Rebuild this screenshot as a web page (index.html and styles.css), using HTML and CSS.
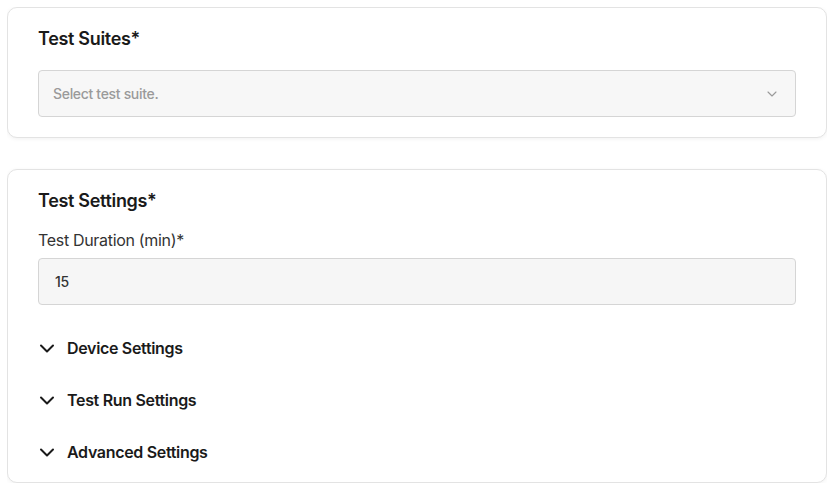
FILE: index.html
```html
<!DOCTYPE html>
<html lang="en">
<head>
    <meta charset="UTF-8">
    <meta name="viewport" content="width=device-width, initial-scale=1.0">
    <title>Test Configuration</title>
    <link rel="stylesheet" href="styles.css">
</head>
<body>
    <div class="card">
        <h2 class="card-title">Test Suites*</h2>
        <div class="select-box">
            <span class="placeholder">Select test suite.</span>
            <svg class="select-chevron" width="10" height="6" viewBox="0 0 10 6" fill="none">
                <path d="M1 1l4 4 4-4" stroke="#9a9a9a" stroke-width="1.1" stroke-linecap="round" stroke-linejoin="round"/>
            </svg>
        </div>
    </div>

    <div class="card card-settings">
        <h2 class="card-title">Test Settings*</h2>
        <label class="field-label" for="duration">Test Duration (min)*</label>
        <input class="text-input" id="duration" type="text" value="15">

        <div class="accordion">
            <div class="accordion-item">
                <svg class="acc-chevron" width="18" height="18" viewBox="0 0 18 18" fill="none">
                    <path d="M3 6.5l6 6 6-6" stroke="#1a1a1a" stroke-width="2" stroke-linecap="round" stroke-linejoin="round"/>
                </svg>
                <span>Device Settings</span>
            </div>
            <div class="accordion-item">
                <svg class="acc-chevron" width="18" height="18" viewBox="0 0 18 18" fill="none">
                    <path d="M3 6.5l6 6 6-6" stroke="#1a1a1a" stroke-width="2" stroke-linecap="round" stroke-linejoin="round"/>
                </svg>
                <span>Test Run Settings</span>
            </div>
            <div class="accordion-item">
                <svg class="acc-chevron" width="18" height="18" viewBox="0 0 18 18" fill="none">
                    <path d="M3 6.5l6 6 6-6" stroke="#1a1a1a" stroke-width="2" stroke-linecap="round" stroke-linejoin="round"/>
                </svg>
                <span>Advanced Settings</span>
            </div>
        </div>
    </div>
</body>
</html>
```

FILE: styles.css
```css
body {
    font-family: Inter, "Noto Sans", sans-serif;
    letter-spacing: -0.02em;
    margin: 7px;
    background-color: #ffffff;
    color: #1a1a1a;
}
.card {
    border: 1px solid #e3e3e3;
    border-radius: 10px;
    box-shadow: 0 1px 4px rgba(0, 0, 0, 0.06);
    padding: 20px 30px;
    background-color: #ffffff;
}
.card + .card {
    margin-top: 31px;
}
.card-settings {
    padding-bottom: 4px;
}
.card-title {
    margin: 0;
    font-size: 18px;
    line-height: 22px;
    font-weight: 600;
    color: #1a1a1a;
}
.select-box {
    margin-top: 20px;
    height: 47px;
    box-sizing: border-box;
    display: flex;
    align-items: center;
    justify-content: space-between;
    padding: 0 18px 0 14px;
    background-color: #f7f7f7;
    border: 1px solid #d5d5d5;
    border-radius: 4px;
}
.placeholder {
    font-size: 14px;
    font-weight: 500;
    color: #9a9a9a;
}
.field-label {
    display: block;
    margin-top: 18px;
    font-size: 16px;
    line-height: 20px;
    color: #333333;
}
.text-input {
    display: block;
    margin-top: 8px;
    width: 100%;
    height: 47px;
    box-sizing: border-box;
    padding: 0 16px;
    font-family: inherit;
    font-size: 14px;
    font-weight: 500;
    letter-spacing: inherit;
    color: #333333;
    background-color: #f6f6f6;
    border: 1px solid #d5d5d5;
    border-radius: 4px;
    outline: none;
}
.accordion {
    margin-top: 17px;
}
.accordion-item {
    display: flex;
    align-items: center;
    gap: 11px;
    height: 52px;
    font-size: 16px;
    font-weight: 600;
    color: #1a1a1a;
}
```
